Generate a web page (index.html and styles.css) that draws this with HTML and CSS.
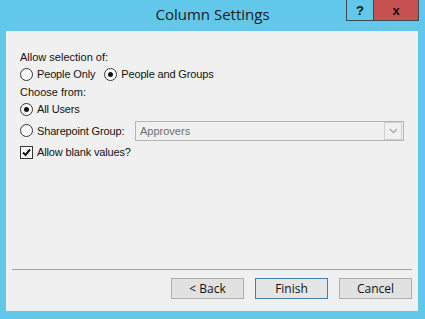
FILE: index.html
```html
<!DOCTYPE html>
<html lang="en">
<head>
    <meta charset="UTF-8">
    <title>Column Settings</title>
    <link rel="stylesheet" href="styles.css">
</head>
<body>
    <div class="window">
        <div class="titlebar">
            <div></div>
            <div class="title">Column Settings</div>
            <div class="caption-btns">
                <span class="cap-btn help">?</span>
                <span class="cap-btn close">x</span>
            </div>
        </div>

        <div class="client">
            <div class="content">
                <div class="row label">Allow selection of:</div>
                <div class="row opt">
                    <label class="choice"><span class="radio"></span>People Only</label>
                    <label class="choice second"><span class="radio checked"></span>People and Groups</label>
                </div>
                <div class="row label spaced">Choose from:</div>
                <div class="row opt">
                    <label class="choice"><span class="radio checked"></span>All Users</label>
                </div>
                <div class="row group-row">
                    <label class="choice group-label"><span class="radio"></span>Sharepoint Group:</label>
                    <div class="combo">
                        <span class="combo-text">Approvers</span>
                        <span class="combo-btn">
                            <svg width="9" height="6" viewBox="0 0 9 6"><path d="M1 1 L4.5 4.5 L8 1" fill="none" stroke="#a8a8a8" stroke-width="1.3"/></svg>
                        </span>
                    </div>
                </div>
                <div class="row opt">
                    <label class="choice">
                        <span class="check">
                            <svg width="11" height="11" viewBox="0 0 11 11"><path d="M2 5.5 L4.5 8 L9 2.5" fill="none" stroke="#111" stroke-width="2"/></svg>
                        </span>Allow blank values?
                    </label>
                </div>
            </div>

            <div class="footer">
                <button class="btn">&lt; Back</button>
                <button class="btn default">Finish</button>
                <button class="btn">Cancel</button>
            </div>
        </div>
    </div>
</body>
</html>
```

FILE: styles.css
```css
body {
    margin: 0;
    background-color: #62c8ea;
    font-family: "Liberation Sans", Arial, sans-serif;
}
.window {
    width: 425px;
    height: 319px;
    display: flex;
    flex-direction: column;
}
.titlebar {
    height: 31px;
    display: grid;
    grid-template-columns: 1fr auto 1fr;
}
.title {
    font-family: "Open Sans", sans-serif;
    font-size: 15px;
    color: #1b1b1b;
    padding-top: 4px;
}
.caption-btns {
    display: flex;
    justify-content: flex-end;
    align-items: flex-start;
    padding-right: 6px;
}
.cap-btn {
    height: 20px;
    border: 1px solid #3a4b55;
    border-top: none;
    font-family: "Liberation Sans", Arial, sans-serif;
    font-weight: bold;
    font-size: 13px;
    color: #111;
    display: flex;
    align-items: center;
    justify-content: center;
}
.help {
    width: 26px;
}
.close {
    width: 44px;
    background-color: #c75050;
    border-left: none;
}
.client {
    flex: 1;
    margin: 0 7px 8px 6px;
    background-color: #f0f0f0;
    display: flex;
    flex-direction: column;
}
.content {
    flex: 1;
    padding: 19px 0 0 14px;
    font-size: 11px;
    color: #111;
}
.row {
    display: flex;
    align-items: center;
}
.label {
    height: 14px;
}
.spaced {
    margin-top: 3px;
}
.opt {
    height: 16px;
    margin: 2px 0;
}
.choice {
    display: flex;
    align-items: center;
    letter-spacing: -0.15px;
}
.second {
    margin-left: 9px;
}
.radio {
    width: 11px;
    height: 11px;
    border: 1px solid #333;
    border-radius: 50%;
    background-color: #fff;
    margin-right: 4px;
    display: flex;
    align-items: center;
    justify-content: center;
}
.radio.checked::after {
    content: "";
    width: 5px;
    height: 5px;
    border-radius: 50%;
    background-color: #111;
}
.check {
    width: 11px;
    height: 11px;
    border: 1px solid #333;
    background-color: #fff;
    margin-right: 4px;
    display: flex;
    align-items: center;
    justify-content: center;
}
.group-row {
    height: 21px;
    margin: 3px 0;
}
.group-label {
    width: 115px;
}
.combo {
    width: 267px;
    height: 18px;
    border: 1px solid #b4b4b4;
    background-color: #f0f0f0;
    display: flex;
    align-items: center;
}
.combo-text {
    flex: 1;
    padding-left: 4px;
    color: #6d6d6d;
}
.combo-btn {
    width: 16px;
    height: 16px;
    border: 1px solid #d0d0d0;
    margin-right: 1px;
    display: flex;
    align-items: center;
    justify-content: center;
}
.footer {
    margin: 0 6px;
    border-top: 1px solid #a0a0a0;
    height: 42px;
    display: flex;
    justify-content: flex-end;
    align-items: flex-start;
    gap: 11px;
    padding-top: 8px;
    box-sizing: border-box;
}
.btn {
    width: 73px;
    height: 21px;
    background-color: #e1e1e1;
    border: 1px solid #adadad;
    font-family: "Open Sans", sans-serif;
    font-size: 12px;
    color: #111;
    padding: 0;
}
.default {
    border-color: #3c7fb1;
    background-color: #e5e5e5;
}
```
